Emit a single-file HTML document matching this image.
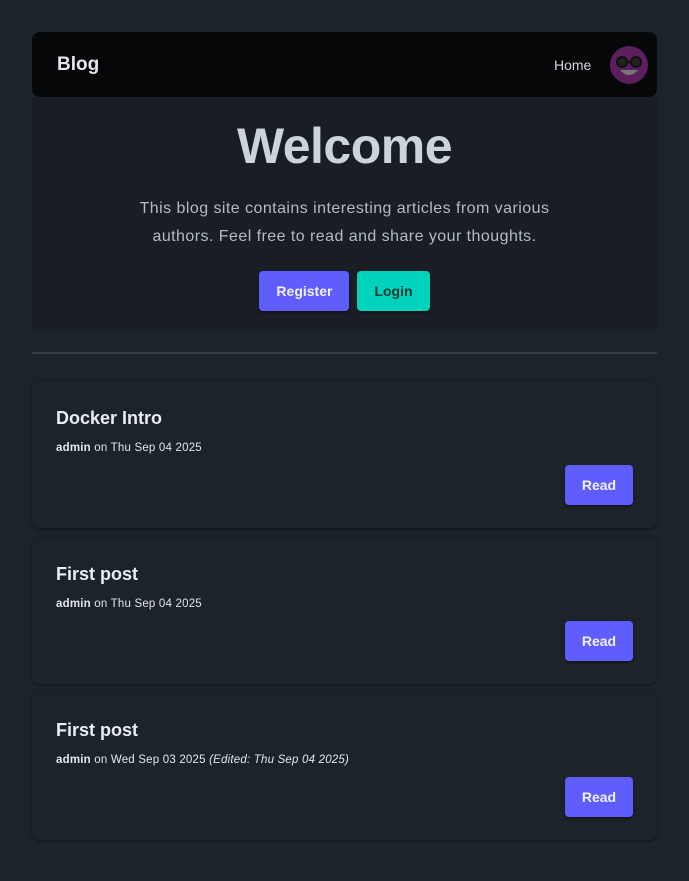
<!DOCTYPE html>
<html><head><meta charset="utf-8"><style>
*{box-sizing:border-box;margin:0;padding:0}
body{width:689px;height:881px;background:#1d232a;font-family:"Liberation Sans",sans-serif;color:#a6adbb;position:relative;overflow:hidden}
.nav{position:absolute;left:32px;top:32px;width:625px;height:65px;background:#060708;border-radius:8px}
.nav .t{position:absolute;left:25px;top:22px;font-size:19px;font-weight:bold;color:#e5e7eb}
.nav .h{position:absolute;left:522px;top:25px;font-size:14px;color:#d4d4d8}
.av{position:absolute;left:578px;top:14px;width:38px;height:38px;border-radius:50%;background:#5b1f5e}
.hero{position:absolute;left:32px;top:97px;width:625px;height:232px;background:#191e24;text-align:center}
.hero h1{margin-top:20px;font-size:50px;font-weight:bold;color:#ccd3da;letter-spacing:-0.5px}
.hero p{margin:20px auto 0;width:440px;font-size:16px;line-height:28px;color:#b4bac4;letter-spacing:0.45px}
.btns{margin-top:20px}
.btn{display:inline-block;height:40px;line-height:40px;padding:0 17px;border-radius:4px;font-size:14px;font-weight:bold;margin:0 3px;box-shadow:0 2px 2px rgba(0,0,0,.35)}
.reg{background:#605dff;color:#f1f0ff}
.log{background:#00d3bb;color:#0c3a35;margin-left:5px}
hr{position:absolute;left:32px;top:352px;width:625px;border:0;border-top:2px solid #363c44}
.card{position:absolute;left:32px;width:625px;height:147px;background:#1d232a;border-radius:8px;box-shadow:0 1px 3px rgba(0,0,0,.35),0 0 0 1px rgba(0,0,0,.08)}
.card h2{position:absolute;left:24px;top:27px;font-size:18px;font-weight:bold;color:#e8edf2}
.card .m{position:absolute;left:24px;top:61px;font-size:11.5px;letter-spacing:0.2px;color:#e2e6ea}
.card .rd{position:absolute;right:24px;top:84px;width:68px;padding:0;margin:0;text-align:center;background:#605dff;color:#f1f0ff}
</style></head><body>
<div class="nav"><div class="t">Blog</div><div class="h">Home</div>
<div class="av"><svg width="38" height="38" viewBox="0 0 38 38"><circle cx="12" cy="16" r="5" fill="#222" stroke="#111" stroke-width="2"/><circle cx="26" cy="16" r="5" fill="#222" stroke="#111" stroke-width="2"/><line x1="17" y1="16" x2="21" y2="16" stroke="#111" stroke-width="2"/><path d="M10 24 Q19 34 28 24 Z" fill="#777"/></svg></div></div>
<div class="hero"><h1>Welcome</h1><p>This blog site contains interesting articles from various authors. Feel free to read and share your thoughts.</p>
<div class="btns"><span class="btn reg">Register</span><span class="btn log">Login</span></div></div>
<hr>
<div class="card" style="top:381px"><h2>Docker Intro</h2><div class="m"><b>admin</b> on Thu Sep 04 2025</div><span class="btn rd">Read</span></div>
<div class="card" style="top:537px"><h2>First post</h2><div class="m"><b>admin</b> on Thu Sep 04 2025</div><span class="btn rd">Read</span></div>
<div class="card" style="top:693px"><h2>First post</h2><div class="m"><b>admin</b> on Wed Sep 03 2025 <i>(Edited: Thu Sep 04 2025)</i></div><span class="btn rd">Read</span></div>
</body></html>
